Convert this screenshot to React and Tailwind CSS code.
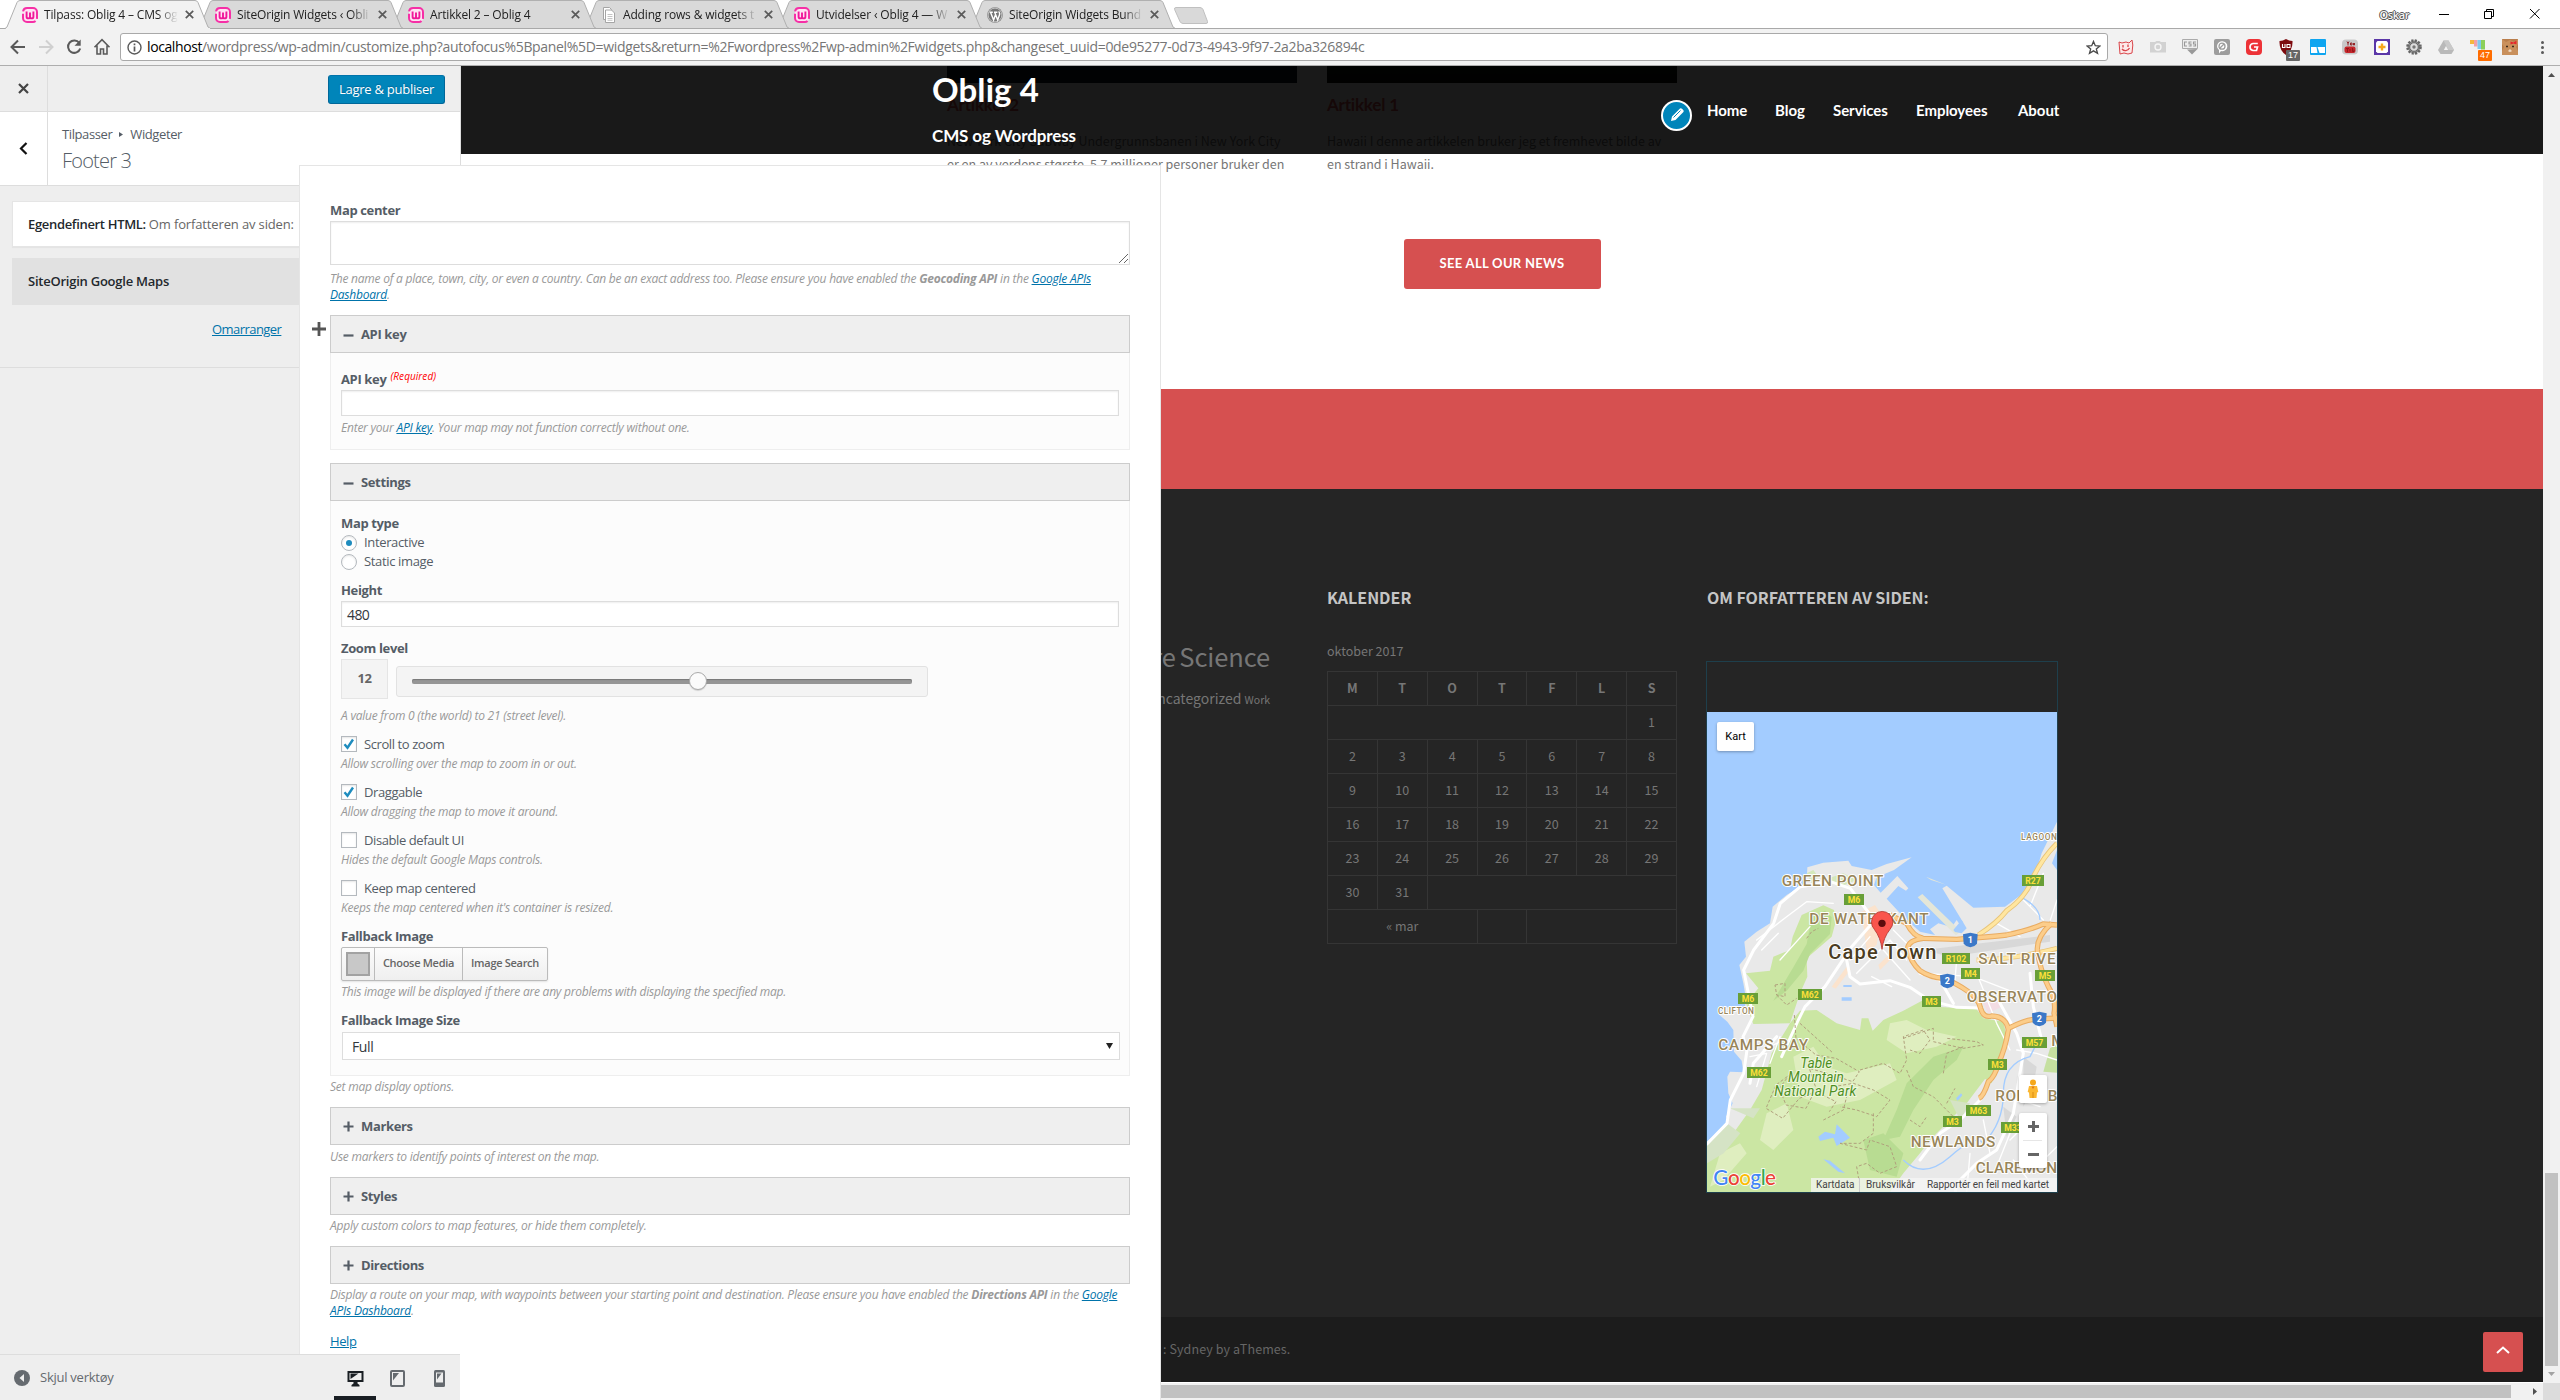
import React from "react";

/* ---------- browser chrome ---------- */

const tabs = [
  { title: "Tilpass: Oblig 4 – CMS og", icon: "wamp", z: "z-[6]", active: true },
  { title: "SiteOrigin Widgets ‹ Obli", icon: "wamp", z: "z-[5]" },
  { title: "Artikkel 2 – Oblig 4", icon: "wamp", z: "z-[4]" },
  { title: "Adding rows & widgets t", icon: "page", z: "z-[3]" },
  { title: "Utvidelser ‹ Oblig 4 — W", icon: "wamp", z: "z-[2]" },
  { title: "SiteOrigin Widgets Bund", icon: "wp", z: "z-[1]" },
];

function Favicon({ kind }) {
  if (kind === "page")
    return (
      <svg className="h-4 w-4 shrink-0" viewBox="0 0 16 16">
        <path d="M2.500.5h6l2 2v10h-8z" fill="#fff" stroke="#a5a5a5" />
        <path d="M4.500 3h6l3 3v9.500h-9z" fill="#fff" stroke="#a5a5a5" />
        <path d="M6.500 7.500h5M6.500 9.500h5M6.500 11.500h5M6.500 13.300h5" stroke="#b5b5b5" strokeWidth=".8" />
      </svg>
    );
  if (kind === "wp")
    return (
      <svg className="h-4 w-4 shrink-0" viewBox="0 0 16 16">
        <circle cx="8" cy="8" r="7.8" fill="#777" />
        <circle cx="8" cy="8" r="6.9" fill="none" stroke="#e6e6e6" strokeWidth=".7" />
        <path d="M2.600 5.200h3.200M7 5.200h3.400M3.600 5.400l3 7.600 2-5.400M7.800 5.400l2.900 7.600 1.900-5.400c.5-1.600-.7-2-.6-3.200" fill="none" stroke="#fff" strokeWidth="1.400" />
      </svg>
    );
  return (
    <svg className="h-4 w-4 shrink-0" viewBox="0 0 16 16">
      <rect x="1" y="1" width="14" height="14" rx="4" fill="#ffe3f3" stroke="#f62fa6" strokeWidth="2" strokeDasharray="19 2.500" />
      <path d="M4.600 4.500v5.200q0 1.700 1.700 1.700T8 9.700V5.500v4.200q0 1.700 1.700 1.700t1.700-1.700V4.500" fill="none" stroke="#f0189a" strokeWidth="1.900" />
    </svg>
  );
}

function Tab({ title, icon, z, active }) {
  return (
    <div className={`relative -ml-[13px] h-[29px] w-[206px] ${z}`}>
      <svg className="absolute inset-0 h-[29px] w-[206px]" viewBox="0 0 206 29">
        <path
          d="M0 28.500 L2 27 L12 2.500 Q13 .5 15 .5 H190 Q192 .5 193 2.500 L203 27 L205.500 28.500"
          fill={active ? "#f2f2f2" : "#d9d9d9"}
          stroke="#b0b0b0"
        />
        {active ? <path d="M1 28.500H205" stroke="#f2f2f2" /> : <path d="M0 28.500H206" stroke="#a9a9a9" />}
      </svg>
      <div className="relative flex h-[29px] items-center pl-[17px]">
        <Favicon kind={icon} />
        <span className="ml-[6px] h-5 w-[134px] overflow-hidden [mask-image:linear-gradient(to_right,black_85%,transparent)] text-[12px] leading-5 tracking-[-0.16px] whitespace-nowrap text-[#222]">
          {title}
        </span>
        <svg className="ml-[7px] h-[9px] w-[9px]" viewBox="0 0 9 9">
          <path d="M.8.8l7.400 7.400M8.200.8L.8 8.200" stroke="#5a5a5a" strokeWidth="1.700" />
        </svg>
      </div>
    </div>
  );
}

function TabStrip() {
  return (
    <div className="flex h-[29px] border-b border-[#a9a9a9] bg-white">
      <div className="flex h-[29px] pl-[18px]">
        {tabs.map((t) => (
          <Tab key={t.title} {...t} />
        ))}
        <svg className="-ml-[3px] mt-[6px] h-[19px] w-[38px]" viewBox="0 0 38 19">
          <path d="M3 1.500h24q2 0 3 2l4.500 12q.6 2-1.500 2H10q-2 0-3-2L1.600 3.500q-.6-2 1.400-2z" fill="#d9d9d9" stroke="#c0c0c0" />
        </svg>
      </div>
      <div className="ml-auto flex h-[28px] items-center pr-[20px]">
        <span className="mr-[30px] text-[11px] leading-none font-semibold tracking-[-0.4px] text-[#f5f5f5] [text-shadow:1px_0_0_#555,-1px_0_0_#555,0_1px_0_#555,0_-1px_0_#555]">
          Oskar
        </span>
        <svg className="h-3 w-[101px]" viewBox="0 0 101 12">
          <path d="M0 6.500h10" stroke="#000" />
          <path d="M45.500 3.500h7v7h-7zM47.500 3.500v-2h7v7h-2" fill="none" stroke="#000" />
          <path d="M91 1l9.500 9.500M100.500 1L91 10.500" stroke="#000" />
        </svg>
      </div>
    </div>
  );
}

const extensions = [
  <g key="a">
    <path d="M1 3l3 1 4-1 3 1 3-3 .8 5-.8 8-4 1-4-1-4 1z" fill="#fdeaea" stroke="#d9454a" />
    <path d="M5 6v2.500M10 5.500V8M4 10c2 2.500 6 2 7.500-1" fill="none" stroke="#d9454a" strokeWidth="1.300" />
  </g>,
  <g key="b">
    <path d="M0 3h5l1.500-1h3L11 3h5v10.500H0z" fill="#d2d2d2" />
    <circle cx="8" cy="8" r="3" fill="none" stroke="#f6f6f6" strokeWidth="1.400" />
  </g>,
  <g key="c">
    <path d="M.5.5h15v9h-15z" fill="#eee" stroke="#aaa" />
    <path d="M5 3H2.500v4H5M9.500 3H7v2h2v2H6.700M14 3h-2.500v2h2v2h-2.300" fill="none" stroke="#999" strokeWidth="1.100" />
    <path d="M5 10.500l5 5L15.500 10z" fill="#999" />
  </g>,
  <g key="d">
    <rect width="16" height="16" rx="2" fill="#9d9d9d" />
    <path d="M8 2.200a5 5 0 1 1-1 9.800L5 14.500v-3.400A5 5 0 0 1 8 2.200z" fill="#fff" />
    <circle cx="8" cy="7.200" r="3" fill="none" stroke="#9d9d9d" strokeWidth="1.300" />
    <path d="M6 9l4-4" stroke="#9d9d9d" strokeWidth="1.300" />
  </g>,
  <g key="e">
    <rect width="16" height="16" rx="4" fill="#ed3237" />
    <path d="M11.800 4.500H7Q4 5 4 8t3 3.500h3.500L11.500 8H8" fill="none" stroke="#fff" strokeWidth="1.700" />
  </g>,
  <g key="f">
    <path d="M8 0q3 2 6.500 2 .5 9-6.500 14Q1 11 1.500 2 5 2 8 0z" fill="#7d0a0e" />
    <path d="M4.500 5v3.500h2.500V5M9 5v3.500h3V5.500H9" fill="none" stroke="#fff" strokeWidth="1.100" />
  </g>,
  <g key="g">
    <rect width="16" height="16" rx="1" fill="#0ea5f0" />
    <path d="M1 8h5.500l1 6H1zM7.500 8H15v6H9.500z" fill="#fff" />
  </g>,
  <g key="h">
    <rect y=".5" width="16" height="15" rx="4" fill="#c9c9c9" />
    <rect x="2.500" y="7.500" width="11" height="6.500" rx="2" fill="#c6262b" />
    <path d="M5 2.500l1 2 1-2M6 4.500v2M8.500 4h1.500v2H8.500zM11.500 4v2h1V4M4 9.500h3M5.500 9.500V13M8 10v2.500M10.500 9v3.500h1.500V10.500" fill="none" stroke="#8e1519" strokeWidth=".9" />
  </g>,
  <g key="i">
    <rect width="16" height="16" fill="#5b37a8" />
    <path d="M2 3.500L3.500 2h9L14 3.500v9L12.500 14h-9L2 12.500z" fill="#fff" />
    <path d="M8 4.500v7M4.500 8h7" stroke="#f7a81b" strokeWidth="2.400" />
  </g>,
  <g key="j">
    <circle cx="8" cy="8" r="6.500" fill="#909090" stroke="#666" strokeWidth="2.600" strokeDasharray="2.100 1.300" />
    <circle cx="8" cy="8" r="4.300" fill="#ddd" stroke="#666" />
    <circle cx="8" cy="8" r="1.700" fill="#777" />
  </g>,
  <g key="k">
    <path d="M5.500 1.500h5L16 11l-2.500 4h-11L0 11z" fill="#b9b9b9" />
    <path d="M10.500 1.500L16 11h-5.500L5.500 1.500z" fill="#c9c9c9" />
    <path d="M8 7l2.200 4H5.800z" fill="#f2f2f2" />
  </g>,
  <g key="l">
    <path d="M0 1h4v4H0z" fill="#f5b83d" />
    <path d="M4 1h3.500v6.500H4z" fill="#f2a0a8" />
    <path d="M7.500 1H11v9H7.500z" fill="#7fc9f0" />
    <path d="M11 1h4v9.500h-4z" fill="#8ccf5a" />
  </g>,
  <g key="m">
    <rect width="16" height="16" fill="#b97d4b" />
    <path d="M0 0l4 3 4-2 4 2 4-3v5l-2 3 2 4v4H0v-4l2-4-2-3z" fill="#c9905c" />
    <path d="M4 7.500h2M10 7.500h2" stroke="#3c2a1a" strokeWidth="1.500" />
    <path d="M6 12q2 2 4 0l-2-2z" fill="#f0d9c0" />
    <path d="M8.500 2.500l3 1 3-2v4l-3-1-3 1z" fill="#e6262b" />
  </g>,
];

function Toolbar() {
  return (
    <div className="flex h-[37px] items-center border-b border-[#aeaeae] bg-[#f2f2f2] pl-[10px]">
      <svg className="h-5 w-[104px]" viewBox="0 0 104 20">
        <path d="M15 10H2M8 3.500L1.500 10 8 16.500" fill="none" stroke="#5a5a5a" strokeWidth="2" />
        <path d="M29 10h13M36 3.500l6.500 6.500-6.500 6.500" fill="none" stroke="#d0d0d0" strokeWidth="2" />
        <path d="M69.300 6A6.200 6.200 0 1 0 70.200 11.500" fill="none" stroke="#5a5a5a" strokeWidth="2" />
        <path d="M70.700 2.500v6.200h-6.200z" fill="#5a5a5a" />
        <path d="M84.500 10.200L92 2.700l7.500 7.500M87 8.500v8.500h3.500v-5h3v5H97V8.500" fill="none" stroke="#5a5a5a" strokeWidth="1.600" />
      </svg>
      <div className="ml-[6px] flex h-[28px] w-[1988px] items-center rounded-[3px] border border-[#a9a9a9] bg-white pl-[6px] pr-[6px]">
        <svg className="h-[15px] w-[15px]" viewBox="0 0 15 15">
          <circle cx="7.500" cy="7.500" r="6.500" fill="none" stroke="#5a5a5a" strokeWidth="1.400" />
          <path d="M7.500 6.500v5M7.500 3.500v1.700" stroke="#5a5a5a" strokeWidth="1.700" />
        </svg>
        <div className="ml-[5px] text-[14px] leading-5 tracking-[-0.325px] whitespace-nowrap text-[#767676]">
          <span className="tracking-[-0.4px] text-black">localhost</span>
          /wordpress/wp-admin/customize.php?autofocus%5Bpanel%5D=widgets&amp;return=%2Fwordpress%2Fwp-admin%2Fwidgets.php&amp;changeset_uuid=0de95277-0d73-4943-9f97-2a2ba326894c
        </div>
        <svg className="ml-auto h-[15px] w-[15px]" viewBox="0 0 16 16">
          <path d="M8 1.500l1.900 4.600 4.900.3-3.800 3.100 1.300 4.800L8 11.600l-4.300 2.700L5 9.500 1.200 6.400l4.900-.3z" fill="none" stroke="#4a4a4a" strokeWidth="1.400" />
        </svg>
      </div>
      <div className="ml-[2px] flex">
        {extensions.map((icon, i) => (
          <div key={i} className="relative flex w-8 justify-center">
            <svg className="h-4 w-4" viewBox="0 0 16 16">{icon}</svg>
            {i === 5 && (
              <span className="absolute top-[11px] left-4 h-[11px] w-[14px] rounded-[1px] bg-[#666] text-center font-['Liberation_Sans'] text-[9px] leading-[11px] text-white">17</span>
            )}
            {i === 11 && (
              <span className="absolute top-[11px] left-4 h-[11px] w-[14px] rounded-[1px] bg-[#ff6d00] text-center font-['Liberation_Sans'] text-[9px] leading-[11px] text-white">47</span>
            )}
          </div>
        ))}
      </div>
      <div className="ml-[15px] flex flex-col gap-[2px]">
        <i className="h-[3px] w-[3px] rounded-full bg-[#5a5a5a]" />
        <i className="h-[3px] w-[3px] rounded-full bg-[#5a5a5a]" />
        <i className="h-[3px] w-[3px] rounded-full bg-[#5a5a5a]" />
      </div>
    </div>
  );
}

/* ---------- customizer sidebar ---------- */

function Sidebar() {
  return (
    <div className="flex w-[461px] shrink-0 flex-col border-r border-[#ddd] bg-[#eee] text-[13px]">
      <div className="flex h-[46px] items-center border-b border-[#ddd]">
        <div className="flex h-full w-12 items-center justify-center border-r border-[#ddd]">
          <svg className="h-[11px] w-[11px]" viewBox="0 0 11 11">
            <path d="M1 1l9 9M10 1L1 10" stroke="#444" strokeWidth="2.200" />
          </svg>
        </div>
        <button className="ml-auto mr-[15px] mt-px h-[29px] w-[117px] rounded-[3px] border border-[#006799] border-t-[#0073aa] bg-[#0085ba] leading-[26px] tracking-[-0.26px] text-white [text-shadow:0_-1px_1px_#006799]">
          Lagre &amp; publiser
        </button>
      </div>
      <div className="flex h-[74px] border-b border-[#ddd] bg-white">
        <div className="flex h-full w-12 items-center justify-center border-r border-[#ddd]">
          <svg className="h-[13px] w-[9px]" viewBox="0 0 9 13">
            <path d="M7.500 1L2 6.500 7.500 12" fill="none" stroke="#111" strokeWidth="2.200" />
          </svg>
        </div>
        <div className="pl-[14px] pt-[12px]">
          <div className="flex items-center leading-5 tracking-[-0.4px] text-[#555d66]">
            Tilpasser
            <svg className="mx-[7px] h-[5px] w-1" viewBox="0 0 4 5"><path d="M0 0l4 2.500L0 5z" fill="#555d66" /></svg>
            Widgeter
          </div>
          <div className="mt-[3px] text-[20px] leading-[27px] font-light tracking-[-0.8px] text-[#555d66]">Footer 3</div>
        </div>
      </div>
      <div className="flex h-[182px] flex-col border-b border-[#ddd] pl-3 pt-[15px]">
        <div className="h-[46px] border border-[#e5e5e5] bg-white pl-[15px] leading-[45px] tracking-[-0.33px] shadow-[0_1px_1px_rgba(0,0,0,0.04)]">
          <span className="font-semibold text-[#23282d]">Egendefinert HTML:</span>{" "}
          <span className="tracking-[-0.14px] text-[#666]">Om forfatteren av siden:</span>
        </div>
        <div className="mt-[11px] h-[47px] bg-[#e1e1e1] pl-4 leading-[46px] font-semibold tracking-[-0.24px] text-[#23282d]">SiteOrigin Google Maps</div>
        <a className="mt-[14px] ml-[200px] leading-5 tracking-[-0.55px] text-[#0073aa] underline">Omarranger</a>
      </div>
      <div className="relative z-20 mt-auto flex h-[46px] items-center border-t border-[#ddd] bg-[#eee]">
        <svg className="mt-px ml-[14px] h-4 w-4" viewBox="0 0 16 16">
          <circle cx="8" cy="8" r="8" fill="#656a6f" />
          <path d="M10 4L5.500 8 10 12z" fill="#eee" />
        </svg>
        <span className="mt-px ml-[10px] tracking-[-0.25px] text-[#656a6f]">Skjul verktøy</span>
        <div className="ml-auto flex h-[45px]">
          <div className="flex w-[42px] items-center justify-center border-b-4 border-[#191e23] pt-[5px]">
            <svg className="h-[17px] w-[17px]" viewBox="0 0 17 17">
              <path d="M.5 1h16v11h-6v1.500l2 1.500v1.500h-8V15l2-1.500V12h-6z" fill="#191e23" />
              <path d="M2.500 3h12v7h-12z" fill="#eee" />
              <path d="M3.500 3.500h8l-8 5.500z" fill="#191e23" />
            </svg>
          </div>
          <div className="flex w-[42px] items-center justify-center border-b-4 border-transparent pt-[5px]">
            <svg className="h-[17px] w-[15px]" viewBox="0 0 15 17">
              <rect x="1" y="1" width="13" height="15" rx="1" fill="#eee" stroke="#656a6f" strokeWidth="2" />
              <path d="M3 3h6L3 10.500z" fill="#656a6f" />
            </svg>
          </div>
          <div className="flex w-[42px] items-center justify-center border-b-4 border-transparent pt-[5px]">
            <svg className="h-[17px] w-[11px]" viewBox="0 0 11 17">
              <path d="M0 1.500Q0 0 1.500 0h8Q11 0 11 1.500v14q0 1.500-1.500 1.500h-8Q0 17 0 15.500z" fill="#656a6f" />
              <path d="M2 2.500h7v10H2z" fill="#eee" />
              <path d="M3 3.500h4.500L3 9.500z" fill="#656a6f" />
            </svg>
          </div>
        </div>
      </div>
    </div>
  );
}

/* ---------- widget form ---------- */

const Label = ({ className = "", children }) => (
  <div className={`h-5 text-[13px] leading-5 font-bold tracking-[-0.36px] text-[#555d66] ${className}`}>{children}</div>
);

const Desc = ({ className = "", children }) => (
  <div className={`relative top-px text-[12px] leading-4 tracking-[-0.23px] text-[#999] italic ${className}`}>{children}</div>
);

const Link = ({ children }) => <a className="text-[#0073aa] underline">{children}</a>;

function SectionHead({ open, className = "", children }) {
  return (
    <div className={`flex h-[38px] items-center border border-[#ccc] bg-[#efefef] pl-[12px] ${className}`}>
      <svg className="h-[11px] w-[11px]" viewBox="0 0 11 11">
        <path d={open ? "M.5 6.500h10" : "M.5 5.500h10M5.500.5v10"} stroke="#555d66" strokeWidth="2.200" />
      </svg>
      <Label className="ml-[7px]">{children}</Label>
    </div>
  );
}

const inputCls = "h-[26px] border border-[#ddd] bg-white shadow-[inset_0_1px_2px_rgba(0,0,0,0.07)]";

function Check({ label, desc, on }) {
  return (
    <div className="mt-[11px]">
      <div className="flex h-5 items-center">
        <span className="flex h-4 w-4 items-center justify-center border border-[#b4b9be] bg-white shadow-[inset_0_1px_2px_rgba(0,0,0,0.1)]">
          {on && (
            <svg className="h-3 w-3" viewBox="0 0 12 12">
              <path d="M1.500 6.200l3 3.500L10 1.500" fill="none" stroke="#1e8cbe" strokeWidth="2.400" />
            </svg>
          )}
        </span>
        <span className="ml-[7px] text-[13px] leading-5 tracking-[-0.41px] text-[#555d66]">{label}</span>
      </div>
      <Desc className="mt-px">{desc}</Desc>
    </div>
  );
}

function Radio({ label, on }) {
  return (
    <div className="flex h-[19px] items-center">
      <span className="flex h-4 w-4 items-center justify-center rounded-full border border-[#b4b9be] bg-white shadow-[inset_0_1px_2px_rgba(0,0,0,0.1)]">
        {on && <i className="h-[6px] w-[6px] rounded-full bg-[#1e8cbe]" />}
      </span>
      <span className="ml-[7px] text-[13px] leading-[19px] tracking-[-0.35px] text-[#555d66]">{label}</span>
    </div>
  );
}

function WidgetPanel() {
  return (
    <div className="absolute top-[165px] left-[299px] z-10 flex h-[1235px] w-[862px] border border-b-0 border-[#e5e5e5] bg-white">
      <div className="w-[30px] shrink-0 pl-3 pt-[156px]">
        <svg className="h-[14px] w-[14px]" viewBox="0 0 14 14">
          <path d="M0 7h14M7 0v14" stroke="#555" strokeWidth="2.800" />
        </svg>
      </div>
      <div className="w-[800px] pt-[34px]">
        <Label>Map center</Label>
        <div className="mt-px flex h-[44px] items-end justify-end border border-[#ddd] bg-white p-px shadow-[inset_0_1px_2px_rgba(0,0,0,0.07)]">
          <svg className="h-[9px] w-[9px]" viewBox="0 0 9 9">
            <path d="M0 9L9 0M5 9l4-4" stroke="#555" strokeWidth=".9" />
          </svg>
        </div>
        <Desc className="mt-[5px]">
          The name of a place, town, city, or even a country. Can be an exact address too. Please ensure you have enabled the <b>Geocoding API</b> in the <Link>Google APIs</Link>
          <br />
          <Link>Dashboard</Link>.
        </Desc>

        <SectionHead open className="mt-[13px]">API key</SectionHead>
        <div className="h-[97px] border border-t-0 border-[#eee] bg-[#fcfcfc] px-[10px] pt-4">
          <Label>
            API key <span className="relative top-[-4px] ml-px text-[10px] font-normal tracking-[0.05px] text-[#f00] italic">(Required)</span>
          </Label>
          <div className={`mt-px ${inputCls}`} />
          <Desc className="mt-[3px]">Enter your <Link>API key</Link>. Your map may not function correctly without one.</Desc>
        </div>

        <SectionHead open className="mt-[13px]">Settings</SectionHead>
        <div className="h-[575px] border border-t-0 border-[#eee] bg-[#fcfcfc] px-[10px] pt-[12px]">
          <Label>Map type</Label>
          <Radio label="Interactive" on />
          <Radio label="Static image" />
          <Label className="mt-[9px]">Height</Label>
          <div className={`mt-px pl-[5px] text-[14px] leading-[25px] tracking-[-0.6px] text-[#32373c] ${inputCls}`}>480</div>
          <Label className="mt-[11px]">Zoom level</Label>
          <div className="mt-px flex h-10 items-center">
            <div className="flex h-10 w-[47px] items-center justify-center border border-[#e5e5e5] bg-[#f4f4f4] text-[13px] font-bold tracking-[-0.4px] text-[#666]">12</div>
            <div className="relative ml-[8px] mt-[4px] flex h-[31px] w-[532px] items-center rounded-[3px] border border-[#e2e2e2] bg-[#f4f4f4] px-[15px]">
              <div className="h-[5px] w-full rounded-[2px] bg-[#959595] shadow-[inset_0_1px_1px_#777]" />
              <i className="absolute top-[5px] left-[292px] h-[18px] w-[18px] rounded-full border border-[#aaa] bg-[#fbfbfb] shadow-[0_1px_1px_rgba(0,0,0,0.15)]" />
            </div>
          </div>
          <Desc className="mt-[8px]">A value from 0 (the world) to 21 (street level).</Desc>
          <Check label="Scroll to zoom" desc="Allow scrolling over the map to zoom in or out." on />
          <Check label="Draggable" desc="Allow dragging the map to move it around." on />
          <Check label="Disable default UI" desc="Hides the default Google Maps controls." />
          <Check label="Keep map centered" desc="Keeps the map centered when it's container is resized." />
          <Label className="mt-[11px]">Fallback Image</Label>
          <div className="mt-px flex h-[34px] w-[207px] items-center rounded-[2px] border border-[#bbb] bg-gradient-to-b from-[#fcfcfc] to-[#efefef] text-[11px] font-semibold tracking-[-0.3px] text-[#666] shadow-[0_1px_2px_rgba(0,0,0,0.1)]">
            <div className="ml-1 h-6 w-6 border-2 border-[#a2a2a2] bg-[#c8c8c8]" />
            <div className="ml-1 flex h-full w-[89px] items-center justify-center border-x border-[#bbb] pb-[2px]">Choose Media</div>
            <div className="flex-1 pb-[2px] text-center">Image Search</div>
          </div>
          <Desc className="mt-[2px]">This image will be displayed if there are any problems with displaying the specified map.</Desc>
          <Label className="mt-[11px]">Fallback Image Size</Label>
          <div className="mt-[2px] ml-px -mr-px flex h-[28px] items-center justify-between border border-[#ddd] bg-white pl-[9px] pr-[6px] text-[14px] tracking-[-0.4px] text-[#32373c]">
            Full
            <svg className="mb-px h-[6px] w-[7px]" viewBox="0 0 7 6"><path d="M0 0h7L3.500 6z" fill="#222" /></svg>
          </div>
        </div>
        <Desc className="mt-[2px]">Set map display options.</Desc>
        <SectionHead className="mt-[13px]">Markers</SectionHead>
        <Desc className="mt-[3px]">Use markers to identify points of interest on the map.</Desc>
        <SectionHead className="mt-[13px]">Styles</SectionHead>
        <Desc className="mt-[2px]">Apply custom colors to map features, or hide them completely.</Desc>
        <SectionHead className="mt-[13px]">Directions</SectionHead>
        <Desc className="mt-[2px]">
          Display a route on your map, with waypoints between your starting point and destination. Please ensure you have enabled the <b>Directions API</b> in the <Link>Google</Link>
          <br />
          <Link>APIs Dashboard</Link>.
        </Desc>
        <div className="mt-[13px] text-[13px] leading-5 tracking-[-0.4px]"><Link>Help</Link></div>
      </div>
    </div>
  );
}

/* ---------- site preview ---------- */

const sourceSans = "font-['Noto_Sans_CJK_JP','Noto_Sans',sans-serif]";
const raleway = "font-['Lato',sans-serif]";

function Article({ title, lines, image }) {
  return (
    <div className="w-[350px]">
      <div className={`h-[17px] ${image}`} />
      <h3 className={`mt-[10px] text-[17px] leading-6 font-bold tracking-[-0.2px] text-[#d65050] ${raleway}`}>{title}</h3>
      <p className="mt-3 text-[12.5px] leading-[23px] whitespace-nowrap text-[#767676]">
        {lines[0]}
        <br />
        {lines[1]}
      </p>
    </div>
  );
}

const nav = [
  ["Home", "w-[68px]"],
  ["Blog", "w-[58px]"],
  ["Services", "w-[83px]"],
  ["Employees", "w-[102px]"],
  ["About", "w-[54px]"],
];

function SiteHeader() {
  return (
    <div className={`absolute inset-x-0 top-0 flex h-[88px] bg-black/90 pl-[471px] text-white ${raleway}`}>
      <div className="pt-[3px]">
        <div className="text-[33px] leading-10 font-bold tracking-[0.1px]">Oblig 4</div>
        <div className="mt-[17px] text-[17px] leading-5 font-bold tracking-[-0.1px]">CMS og Wordpress</div>
      </div>
      <div className="ml-auto mr-[471px] flex h-[98px] items-center">
        <div className="mr-[15px] flex h-[31px] w-[31px] items-center justify-center rounded-full border-2 border-white bg-[#0085ba]">
          <svg className="h-[18px] w-[18px]" viewBox="0 0 18 18">
            <path d="M3 15l1-4.500L12 2.500q1-.8 2 .3l1.200 1.200q1 1 .2 2L7.500 14z" fill="#fff" />
            <path d="M5.500 11.500l7-7" stroke="#0085ba" />
          </svg>
        </div>
        <div className="flex pb-[11px] text-[15px] leading-5 font-bold tracking-[-0.05px]">
          {nav.map(([n, w]) => (
            <span key={n} className={w}>{n}</span>
          ))}
        </div>
      </div>
    </div>
  );
}

function Calendar() {
  const td = "border border-[#353535] p-0 text-center";
  const weeks = [[2, 3, 4, 5, 6, 7, 8], [9, 10, 11, 12, 13, 14, 15], [16, 17, 18, 19, 20, 21, 22], [23, 24, 25, 26, 27, 28, 29]];
  return (
    <table className="mt-[10px] w-[350px] table-fixed border-collapse leading-none">
      <tbody>
        <tr className="h-[34px]">{["M", "T", "O", "T", "F", "L", "S"].map((d, i) => <th key={i} className={`font-bold ${td}`}>{d}</th>)}</tr>
        <tr className="h-[34px]"><td colSpan={6} className={td} /><td className={td}>1</td></tr>
        {weeks.map((w) => (
          <tr key={w[0]} className="h-[34px]">{w.map((d) => <td key={d} className={td}>{d}</td>)}</tr>
        ))}
        <tr className="h-[34px]"><td className={td}>30</td><td className={td}>31</td><td colSpan={5} className={td} /></tr>
        <tr className="h-[34px]"><td colSpan={3} className={td}>« mar</td><td className={td} /><td colSpan={3} className={td} /></tr>
      </tbody>
    </table>
  );
}

const shields = [
  ["M6", 462, 762, 60], ["R27", 996, 705, 66], ["R102", 756, 939, 84], ["M4", 813, 984, 57], ["M5", 1035, 990, 60],
  ["M6", 144, 1059, 60], ["M62", 324, 1047, 72], ["M3", 696, 1068, 57], ["M57", 996, 1191, 75], ["M62", 171, 1281, 72],
  ["M3", 894, 1257, 57], ["M63", 828, 1395, 75], ["M3", 759, 1428, 57], ["M33", 933, 1446, 72],
];

const areas = [
  ["LAGOON", 993, 600, 108, 25], ["GREEN POINT", 275, 739, 305, 46], ["DE WATERKANT", 358, 852, 358, 46],
  ["SALT RIVE", 865, 972, 232, 46], ["OBSERVATO", 830, 1087, 271, 46], ["CLIFTON", 84, 1122, 108, 25],
  ["CAMPS BAY", 85, 1231, 269, 46], ["ROI", 916, 1384, 76, 46], ["B", 1073, 1384, 28, 46], ["M", 1084, 1219, 34, 46],
  ["NEWLANDS", 662, 1522, 254, 46], ["CLAREMONT", 857, 1598, 272, 46],
];

function MapDrawing() {
  const road = { fill: "none", stroke: "#fff", strokeLinecap: "round", strokeLinejoin: "round" };
  const highways = [
    "M600 825 L650 850 Q670 890 700 895 L800 898 Q900 890 950 885 Q1020 870 1060 852 L1101 855",
    "M700 895 Q655 900 653 925 Q660 965 690 992 Q720 1012 760 1015 Q800 1030 835 1055 Q865 1075 872 1105 Q880 1135 905 1128 Q950 1130 955 1170 Q945 1230 925 1270 Q915 1310 895 1325 Q880 1370 867 1375",
    "M955 1165 Q1000 1142 1030 1138 L1101 1134",
    "M1085 850 Q1040 890 1042 930 Q1050 990 1075 1040 Q1100 1080 1092 1120 L1101 1160",
  ];
  return (
    <svg className="absolute inset-0 h-[480px] w-[350px]" viewBox="51 216 1050 1440">
      <path d="M51 216H1101V1656H51z" fill="#a3ccff" />
      <path
        d="M51 1505 L80 1480 115 1445 108 1430 128 1390 115 1360 112 1310 120 1295 160 1297 155 1262 132 1235 130 1170 112 1145 85 1122 108 1102 165 1100 168 1075 160 1030 148 975 168 950 163 905 200 875 240 850 248 800 290 765 350 728 352 682 400 668 475 662 485 678 545 690 590 672 665 652 612 690 560 712 552 735 572 758 622 708 655 745 648 752 625 738 590 776 640 830 690 875 735 885 720 868 745 850 785 862 800 840 808 852 820 848 757 745 770 737 850 803 945 800 1000 760 1040 690 1055 640 1101 545 V1656H51z"
        fill="#e9e9e9"
      />
      <path d="M683 772l14-10 115 112-14 12zM708 710l60 24-45-14z" fill="#e4e6d8" />
      <path d="M790 870l25-30 15 25-15 15-20-4zM1086 670l15-40v60z" fill="#a3ccff" />
      <path d="M335 825 L400 796 432 810 436 850 425 890 350 955 352 1010 330 1060 300 1150 190 1152 168 1090 205 1045 168 1000 240 992 250 950 300 930 308 890z" fill="#cbe6a3" />
      <path d="M365 830l40-18 20 20-5 50-60 60-20 50-50 60-40 30 60-100 40-70z" fill="#b8dc92" />
      <path d="M350 700l20-10 15 20-20 20zM400 720l60-20 40 20-50 20z" fill="#d4e8bc" />
      <path
        d="M330 1112 L380 1110 440 1150 510 1170 515 1135 535 1135 548 1172 580 1140 640 1112 700 1080 740 1100 860 1108 880 1135 940 1145 952 1200 905 1330 860 1300 890 1310 830 1390 780 1440 720 1500 690 1540 640 1600 600 1656 51 1656 51 1560 130 1480 180 1410 215 1350 245 1240 300 1150z"
        fill="#cbe6a3"
      />
      <path d="M310 1250l60-30 40 60 60 20 130-30 20 50-110 60-100 20-80-30z M230 1420l60-30 20 80-60 60-40-30z M600 1150l50-10 60 30 90 20-60 30-90 20-60-40z M90 1540l60-30 20 30-70 80-40 20z" fill="#dfeebf" />
      <path d="M650 1330l80-80 90-30-20 40-70 60-60 90-40 80-50 10 40-90zM520 1500l60-20 60 60-20 70-80-20z" fill="#b8dc92" />
      <path d="M51 1510l60-60 40 30-50 60-50 30zM120 1405h90l-20 30zM780 1380l60 10-30 50z" fill="#d5e3c5" />
      <path d="M1060 1295l20-70 21-12v85z" fill="#c5e0a0" />
      <path d="M385 1490l20-15 30 8 5-30 40 40-40 25-10-25-40 10zM400 1558l20 4 45 38-20-5zM455 1072h30v10h-30zM460 1035h25v6h-25zM798 1375l15-15 4 6-14 16z" fill="#a3ccff" />
      <path d="M515 815l40-20 20 30-15 90-30 20zM425 1040l45-60 12 8-45 58zM565 975l25-25 10 10-30 30z" fill="#fbe3cd" />
      <path d="M880 1090l40-10 15 20-40 20z" fill="#f3dde4" />
      <path d="M700 930l380-45v20l-300 45zM1000 1250l40 30-10 60-30 60zM940 1400l40 30-30 60z" fill="#d8d8d8" />
      <g {...road} strokeWidth="4">
        <path d="M270 960l90-100M200 900l90-70 60-45 80 5M215 930l50-50M480 960l60-70M500 1000l100-100 50 60M545 1010l60 30M610 870l60 60M580 930l80 90M700 1000l150 10 130 50M800 960l-5 60M860 1000l60 150 40 80M1000 780l60 60M920 850l70 40M1060 700l-40 100M1101 780l-20 60M980 1230l60 10 61 20M960 1500l60-60M990 1380l60 20M1000 1500l60 60 41-40M880 1440l20 100M840 1540l-10 116M960 1480l-40 100M970 1560l60 80M220 1230l60-30M240 1270l30-80M180 1250l50-10-30 100" />
      </g>
      <g {...road} strokeWidth="9">
        <path d="M51 1512l60-62 10-70 40-80 10-70-12-40 30-60-12-60-16-80 30-60 60-80 20-60 60-50 90-15 60 20 60 80" />
        <path d="M275 1250l50-110 20-40 60-60 40-60 40-60 70-80" />
        <path d="M470 960l10 50 30 22 90-10 60 20 60 40 80 20 70 2" />
        <path d="M690 1560l60-80 60-40 60-60M690 1000l60 20 40 70M930 1090l50 90 20 60-20 120-10 60-50 110-60 40-60 60-10 66M1020 1000l10 100 30 120M180 1330l10-60 70-80" />
      </g>
      <path d="M640 1560q60 60 140-10t100-40q60-60 60-150t80-110l30-60M990 770q60 30 60 70" fill="none" stroke="#a3ccff" strokeWidth="4" />
      <g fill="none" stroke="#b0a07c" strokeWidth="3" strokeDasharray="9 6">
        <path d="M313 1125l5 70 60 50 60 10 70 40-20 30-60-20-70-20 20 60-30 60-60-10-20-50 30-40-40 30-30 70 50 30 50-60 50-20 60 30-20 30M510 1290l70-20 50 30 20-40-10-70 60-20 20 30-30 40-30-10M640 1195l90-30 0 40 90 20 60-10-20-10-90-10M650 1290l20 50 60 30 60 60M760 1300l10-60 50-20M430 1340l60-10 60 20 50 30-40 50-60-20-50-10M550 1420v60l-40 30-60 0M450 1510l80 20 10-30 60 20 20 60-50 20-40-30-30 10 10 60M330 1150l100 90M255 1035l30-5 0 40-25-5zM260 1065l30 30 30-20M350 895l15-20 20-10M660 1440l30 20 20-30M770 1390l25-45M400 1440l60-30 10-40" />
      </g>
      <path d="M865 885 Q920 850 950 812 Q1010 770 1030 710 Q1060 650 1101 610 M860 960 Q960 960 1101 925" fill="none" stroke="#e8c478" strokeWidth="15" />
      <path d="M865 885 Q920 850 950 812 Q1010 770 1030 710 Q1060 650 1101 610 M860 960 Q960 960 1101 925" fill="none" stroke="#ffe6a0" strokeWidth="10" />
      {highways.map((d) => <path key={d} d={d} fill="none" stroke="#e9ac62" strokeWidth="16" />)}
      {highways.map((d) => <path key={d} d={d} fill="none" stroke="#fccd8a" strokeWidth="10" />)}
      {shields.map(([t, x, y, w], i) => (
        <g key={i}>
          <rect x={x} y={y} width={w} height="33" fill="#689f38" />
          <text x={x + w / 2} y={y + 26} textAnchor="middle" fontSize="26" fontWeight="700" fill="#fde03a" className="font-[Roboto]">{t}</text>
        </g>
      ))}
      {[["1", 841, 900], ["2", 772, 1023], ["2", 1048, 1137]].map(([t, x, y]) => (
        <g key={`${x}`} transform={`translate(${x} ${y})`}>
          <path d="M-22-17l22-5 22 5-2 28Q12 21 0 22-12 21-20 11z" fill="#3b78c8" />
          <text y="10" textAnchor="middle" fontSize="27" fontWeight="700" fill="#fff" className="font-[Roboto]">{t}</text>
        </g>
      ))}
      <g fill="#98855a" stroke="#fff" strokeWidth="6" paintOrder="stroke" strokeLinejoin="round" fontWeight="500" className="font-[Roboto]">
        {areas.map(([t, x, y, w, s]) => (
          <text key={t} x={x} y={y} fontSize={s} textLength={w}>{t}</text>
        ))}
        <text x="415" y="956" fontSize="60" textLength="324" fill="#4a3c22">Cape Town</text>
      </g>
      <g fill="#4d8f1f" stroke="#eef6dc" strokeWidth="6" paintOrder="stroke" fontSize="41" fontStyle="italic" textAnchor="middle" className="font-[Roboto]">
        <text x="379" y="1284">Table</text>
        <text x="378" y="1326">Mountain</text>
        <text x="376" y="1368" textLength="246">National Park</text>
      </g>
      <path d="M576 928 Q572 893 553 868 A32 32 0 1 1 600 868 Q580 893 576 928z" fill="#f9554d" stroke="#b5352f" strokeWidth="2.500" />
      <circle cx="576" cy="850" r="11" fill="#5c0d0d" />
      <text x="70" y="1634" fontSize="62" fontWeight="500" textLength="188" stroke="#fff" strokeWidth="5" paintOrder="stroke" className="font-[Lato]">
        <tspan fill="#4285f4">G</tspan><tspan fill="#ea4335">o</tspan><tspan fill="#fbbc05">o</tspan><tspan fill="#4285f4">g</tspan><tspan fill="#34a853">l</tspan><tspan fill="#ea4335">e</tspan>
      </text>
    </svg>
  );
}

function MapWidget() {
  return (
    <div className="mt-[54px] h-[532px] w-[352px] -ml-px border border-[#1e3f4c] pt-[50px]">
      <div className="relative h-[480px] w-[350px] overflow-hidden font-[Roboto]">
        <MapDrawing />
        <div className="absolute top-[10px] left-[10px] h-[29px] w-[37px] rounded-[2px] bg-white text-center text-[11px] leading-[29px] text-black shadow-[0_1px_3px_rgba(0,0,0,0.3)]">Kart</div>
        <div className="absolute top-[363px] left-[312px] flex h-7 w-7 items-center justify-center rounded-[2px] bg-white shadow-[0_1px_3px_rgba(0,0,0,0.3)]">
          <svg className="h-5 w-3" viewBox="0 0 12 20">
            <circle cx="6" cy="3.500" r="3" fill="#f5a81c" />
            <path d="M2 7h8l1.300 6-1.300.5L9.500 19h-7L2 13.500.7 13z" fill="#fbb731" />
            <path d="M4.500 7.500h3L6 10z" fill="#e0761a" />
            <path d="M6 13v6" stroke="#d98a14" />
          </svg>
        </div>
        <div className="absolute top-[401px] left-[312px] flex h-[55px] w-7 flex-col items-center rounded-[2px] bg-white shadow-[0_1px_3px_rgba(0,0,0,0.3)]">
          <svg className="h-[55px] w-7" viewBox="0 0 28 55">
            <path d="M9 13.500h11M14.500 8v11M9 41.500h11" stroke="#666" strokeWidth="3" />
            <path d="M4 27.500h19" stroke="#e6e6e6" />
          </svg>
        </div>
        <div className="absolute right-0 bottom-0 flex h-[14px] w-[246px] bg-[#f5f5f5]/75 text-[10px] leading-[14px] whitespace-nowrap text-[#444]">
          <span className="w-[49px] border-r border-[#ccc] pl-[5px]">Kartdata</span>
          <span className="w-[61px] pl-[6px]">Bruksvilkår</span>
          <span className="pl-[6px] tracking-[-0.08px]">Rapportér en feil med kartet</span>
        </div>
      </div>
    </div>
  );
}

function Preview() {
  return (
    <div className={`relative w-[2082px] shrink-0 bg-white text-[12.5px] text-[#767676] ${sourceSans}`}>
      <div className="mx-auto flex h-[173px] w-[1110px] gap-[30px]">
        <Article
          image="bg-[#10181f]"
          title="Artikkel 2"
          lines={["New York City Subway  Undergrunnsbanen i New York City", "er en av verdens største. 5,7 millioner personer bruker den"]}
        />
        <Article
          image="bg-gradient-to-b from-[#101a14] to-[#0c0c08]"
          title="Artikkel 1"
          lines={["Hawaii I denne artikkelen bruker jeg et fremhevet bilde av", "en strand i Hawaii."]}
        />
      </div>
      <button className={`mx-auto block h-[50px] w-[197px] rounded-[3px] bg-[#d65050] text-[13px] font-bold tracking-[0.3px] text-white ${raleway}`}>
        SEE ALL OUR NEWS
      </button>
      <div className="mt-[100px] h-[100px] bg-[#d65050]" />
      <div className="h-[828px] bg-[#252525] pt-[98px]">
        <div className="mx-auto flex w-[1110px] gap-[30px]">
          <div className="w-[350px] pt-[49px] pr-[27px] text-right">
            <div className="text-[25.5px] leading-10 tracking-[-0.1px] [word-spacing:-2px]">re Science</div>
            <div className="mt-[7px] text-[14px] leading-[30px]">ncategorized <span className="text-[10.5px]">Work</span></div>
          </div>
          <div className="w-[350px]">
            <h3 className="text-[16px] leading-5 font-bold text-[#c5c5c5]">KALENDER</h3>
            <div className="mt-[34px] leading-5">oktober 2017</div>
            <Calendar />
          </div>
          <div className="w-[350px]">
            <h3 className="text-[16px] leading-5 font-bold tracking-[-0.06px] text-[#c5c5c5]">OM FORFATTEREN AV SIDEN:</h3>
            <MapWidget />
          </div>
        </div>
      </div>
      <div className="flex h-[65px] items-center justify-between bg-[#1c1c1c] pl-[702px] pr-[20px]">
        <span className="tracking-[0.1px] text-[#666]">: Sydney by aThemes.</span>
        <div className="mt-[5px] flex h-10 w-10 items-center justify-center rounded-[2px] bg-[#d65050]">
          <svg className="mb-1 h-2 w-[14px]" viewBox="0 0 14 8">
            <path d="M1 7l6-5.500L13 7" fill="none" stroke="#fff" strokeWidth="2" />
          </svg>
        </div>
      </div>
      <div className="mt-px flex h-[17px] items-center bg-[#f1f1f1]">
        <div className="h-[13px] w-[2050px] bg-[#c1c1c1]" />
        <svg className="ml-[22px] h-[7px] w-1" viewBox="0 0 4 7"><path d="M0 0l4 3.500L0 7z" fill="#505050" /></svg>
      </div>
      <SiteHeader />
    </div>
  );
}

function VerticalScrollbar() {
  return (
    <div className="flex w-[17px] shrink-0 flex-col items-center bg-[#f1f1f1]">
      <svg className="mt-[7px] h-1 w-[7px]" viewBox="0 0 7 4"><path d="M0 4L3.500 0 7 4z" fill="#505050" /></svg>
      <div className="mt-auto h-[193px] w-[13px] bg-[#c1c1c1]" />
      <svg className="mt-[6px] h-1 w-[7px]" viewBox="0 0 7 4"><path d="M0 0l3.500 4L7 0z" fill="#a3a3a3" /></svg>
      <div className="mt-[7px] h-[17px] w-full bg-[#dcdcdc]" />
    </div>
  );
}

export default function App() {
  return (
    <div className="relative flex h-[1400px] w-[2560px] flex-col overflow-hidden bg-white font-['Open_Sans','Noto_Sans',sans-serif]">
      <TabStrip />
      <Toolbar />
      <div className="flex flex-1">
        <Sidebar />
        <Preview />
        <VerticalScrollbar />
      </div>
      <WidgetPanel />
    </div>
  );
}
